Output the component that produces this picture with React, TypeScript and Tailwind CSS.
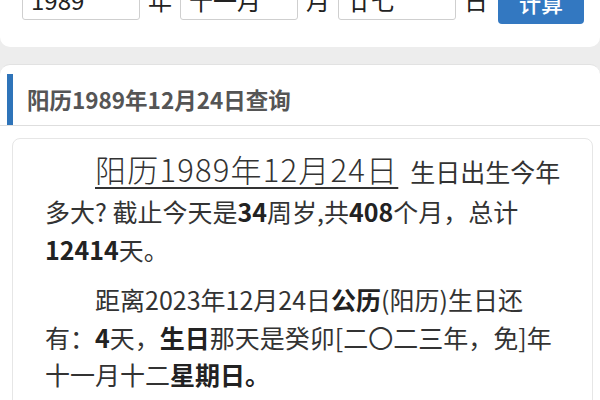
import React from 'react';

const font = { fontFamily: '"Noto Sans CJK SC", "Noto Sans", sans-serif' };

function Field({ value }: { value: string }) {
    return (
        <div className="w-[118px] h-[40px] border border-[#cfcfcf] rounded-[3px] bg-white flex items-center px-[8px] text-[24px] text-[#222] shrink-0">
            {value}
        </div>
    );
}

function Unit({ label }: { label: string }) {
    return <span className="w-[24px] mx-[8px] text-[24px] text-[#222] shrink-0 leading-none">{label}</span>;
}

export default function App() {
    return (
        <div className="w-[600px] h-[400px] overflow-hidden bg-[#ededed]" style={font}>
            {/* Lunar date form (scrolled, only bottom visible) */}
            <div className="h-[47px] bg-white rounded-b-[10px] overflow-hidden">
                <div className="flex items-center -mt-[24px] pl-[22px]">
                    <Field value="1989" />
                    <Unit label="年" />
                    <Field value="十一月" />
                    <Unit label="月" />
                    <Field value="廿七" />
                    <Unit label="日" />
                    <button className="ml-[2px] w-[86px] h-[44px] mt-[4px] rounded-[4px] bg-[#3378c1] text-white text-[22px] font-medium">
                        计算
                    </button>
                </div>
            </div>

            {/* Result */}
            <div className="mt-[17px] bg-white rounded-t-[10px] border-t border-[#e2e2e2] h-[400px]">
                <div className="pt-[9px] pl-[7px] border-b border-[#dedede]">
                    <div className="h-[51px] border-l-[6px] border-[#2f74b9] pl-[14px] flex items-center text-[22.5px] font-bold text-[#555]">
                        阳历1989年12月24日查询
                    </div>
                </div>

                <div className="ml-[12px] mr-[7px] mt-[12px] border border-[#e6e6e6] rounded-[8px] pl-[32px] pr-[24px] pt-[6px] pb-4 text-[25px] leading-[37.5px] text-[#333]">
                    <p className="indent-[2em]">
                        <span className="text-[31px] font-light tracking-[1.2px] underline decoration-[1.5px] underline-offset-[5px] leading-[48px] mr-[12px]">
                            阳历1989年12月24日
                        </span>
                        生日出生今年多大? 截止今天是<b className="text-[#222]">34</b>周岁,共<b className="text-[#222]">408</b>个月，总计<b className="text-[#222]">12414</b>天。
                    </p>
                    <p className="indent-[2em] mt-[13px] pr-[8px]">
                        距离2023年12月24日<b className="text-[#222]">公历</b>(阳历)生日还有：<b className="text-[#222]">4</b>天，<b className="text-[#222]">生日</b>那天是癸卯[二〇二三年，免]年十一月十二<b className="text-[#222]">星期日。</b>
                    </p>
                </div>
            </div>
        </div>
    );
}
